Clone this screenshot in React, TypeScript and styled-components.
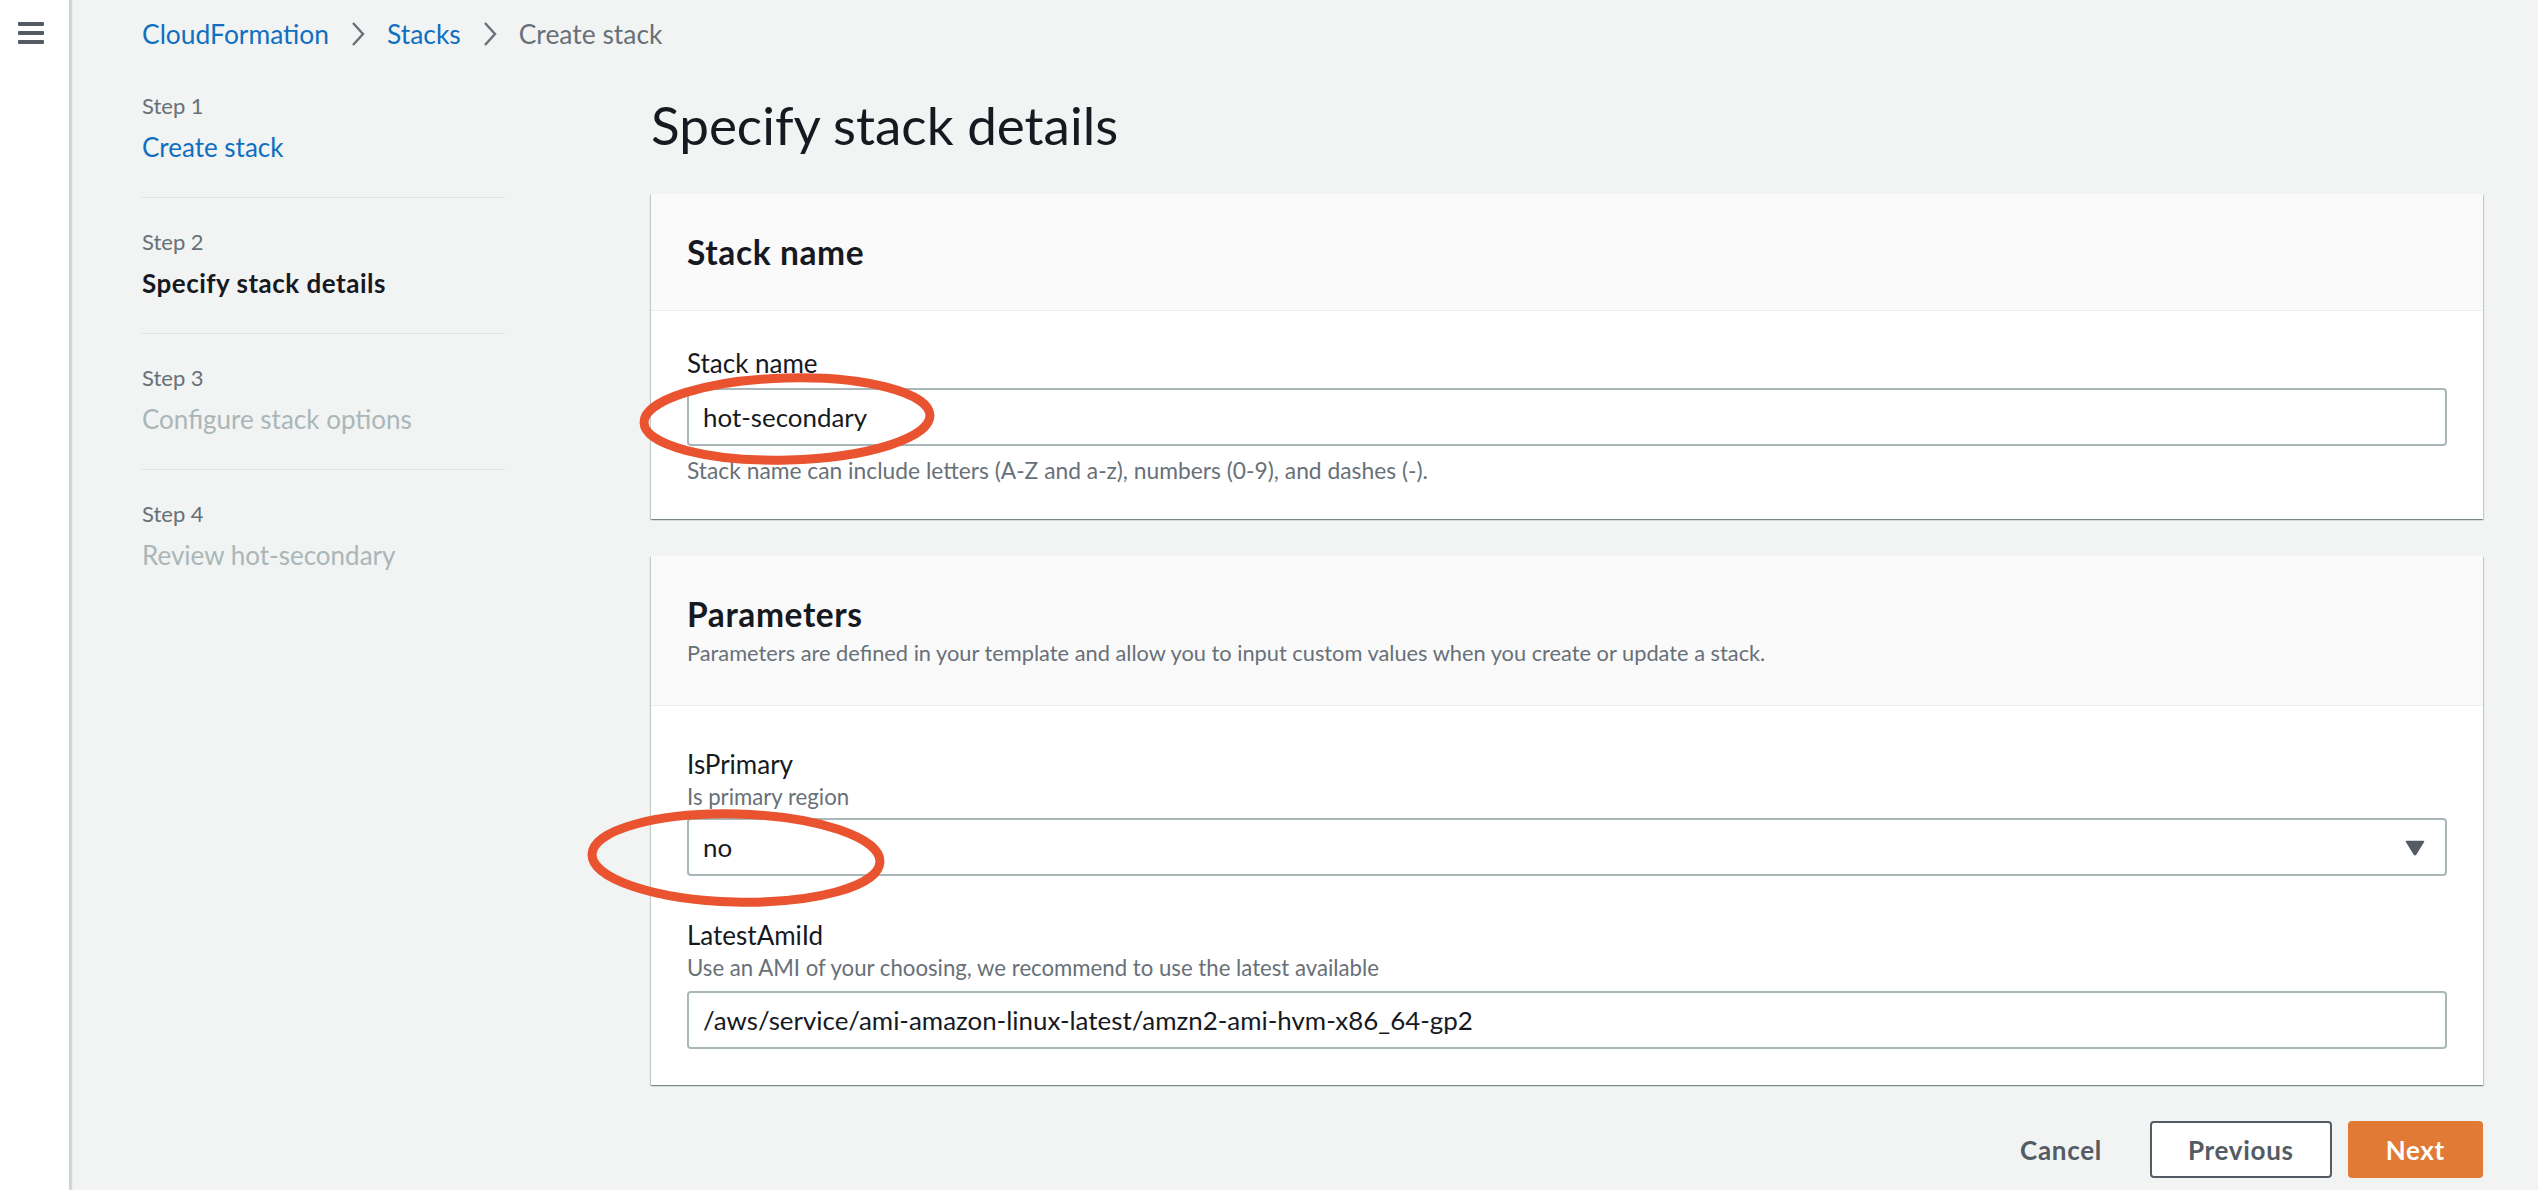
import React from "react";
import styled, { createGlobalStyle } from "styled-components";

// console font stand-in (Amazon Ember is not installed)
const FONT = `"Lato", "Liberation Sans", sans-serif`;

const colors = {
  page: "#f2f3f3",
  text: "#16191f",
  muted: "#687078",
  disabled: "#aab7b8",
  link: "#0f6fc0",
  line: "#dfe3e3",
  control: "#545b64",
  inputBorder: "#aab7b8",
  orange: "#e07a35",
  mark: "#e9532f",
};

const GlobalStyle = createGlobalStyle`
  html, body {
    margin: 0;
    padding: 0;
    background: ${colors.page};
  }
  body {
    font-family: ${FONT};
    color: ${colors.text};
    -webkit-font-smoothing: antialiased;
  }
  * {
    box-sizing: border-box;
  }
`;

const Page = styled.div`
  position: relative;
  display: flex;
  width: 2538px;
  min-height: 1190px;
  background: ${colors.page};
`;

// left rail with the hamburger
const SideRail = styled.nav`
  flex: none;
  width: 71px;
  background: #fff;
  border-right: 2px solid #cfd5d5;
  box-shadow: 1px 0 1px rgba(0, 28, 36, 0.12);
  padding: 22px 0 0 18px;
`;

const MenuButton = styled.button`
  display: flex;
  flex-direction: column;
  gap: 5px;
  width: 26px;
  padding: 0;
  border: 0;
  background: none;
`;

const MenuBar = styled.span`
  display: block;
  height: 4px;
  width: 26px;
  background: ${colors.control};
  border-radius: 1px;
`;

const Content = styled.div`
  flex: 1;
  padding: 14px 55px 0 71px;
`;

const Breadcrumbs = styled.div`
  display: flex;
  align-items: center;
  gap: 21px;
  font-size: 26.4px;
  line-height: 40px;
`;

const Crumb = styled.a`
  color: ${colors.link};
  text-decoration: none;
`;

const CrumbCurrent = styled.span`
  color: ${colors.muted};
`;

const Chevron = () => (
  <svg width="16" height="26" viewBox="0 0 16 26">
    <polyline points="3,2 13,13 3,24" fill="none" stroke="#687078" strokeWidth="2.4" />
  </svg>
);

const Layout = styled.div`
  display: grid;
  grid-template-columns: 363px 1fr;
  column-gap: 146px;
`;

const StepList = styled.ol`
  list-style: none;
  margin: 0;
  padding: 37px 0 0 0;
`;

const StepItem = styled.li`
  padding: 29px 0 30px;
  border-top: 1px solid ${colors.line};

  &:first-child {
    padding-top: 0;
    border-top: 0;
  }
`;

const StepLabel = styled.div`
  font-size: 22px;
  line-height: 29px;
  color: ${colors.muted};
`;

type StepState = "done" | "active" | "todo";

const StepTitle = styled.div<{ $state: StepState }>`
  margin-top: 7px;
  font-size: 26px;
  line-height: 40px;
  color: ${$ => ($.$state === "done" ? colors.link : $.$state === "active" ? colors.text : colors.disabled)};
  font-weight: ${$ => ($.$state === "active" ? 700 : 400)};
  letter-spacing: ${$ => ($.$state === "active" ? "0.5px" : "0")};
`;

const Main = styled.main`
  padding-top: 38px;
`;

const PageTitle = styled.h1`
  margin: 0 0 37px;
  font-size: 53px;
  line-height: 65px;
  font-weight: 400;
  color: ${colors.text};
`;

const Card = styled.section`
  background: #fff;
  box-shadow: 0 1px 1px 0 rgba(0, 28, 36, 0.3), 1px 1px 1px 0 rgba(0, 28, 36, 0.15),
    -1px 1px 1px 0 rgba(0, 28, 36, 0.15);
  margin-bottom: 37px;
`;

const CardHeader = styled.header`
  background: #fafafa;
  border-bottom: 1px solid #eaeded;
  padding: 38px 36px 38px;
`;

const CardTitle = styled.h2`
  margin: 0;
  font-size: 33.5px;
  line-height: 40px;
  font-weight: 700;
  letter-spacing: 0.6px;
`;

const CardDescription = styled.p`
  margin: 4px 0 0;
  font-size: 21.8px;
  line-height: 29px;
  color: ${colors.muted};
`;

const CardBody = styled.div<{ $padTop: number; $padBottom: number }>`
  display: flex;
  flex-direction: column;
  gap: 39px;
  padding: ${$ => $.$padTop}px 36px ${$ => $.$padBottom}px;
`;

const Field = styled.div`
  display: flex;
  flex-direction: column;
`;

const FieldLabel = styled.label`
  font-size: 26px;
  line-height: 40px;
  color: ${colors.text};
`;

const FieldDescription = styled.div`
  margin-top: -2px;
  font-size: 22.2px;
  line-height: 29px;
  color: ${colors.muted};
`;

const FieldHint = styled.div`
  margin-top: 10px;
  font-size: 22.8px;
  line-height: 29px;
  color: ${colors.muted};
`;

const TextInput = styled.div<{ $gap: number }>`
  position: relative;
  display: flex;
  align-items: center;
  height: 58px;
  margin-top: ${$ => $.$gap}px;
  padding: 0 14px;
  border: 2px solid ${colors.inputBorder};
  border-radius: 4px;
  background: #fff;
  font-size: 25.9px;
  color: ${colors.text};
`;

const SelectArrow = styled.span`
  position: absolute;
  right: 20px;
  top: 20px;
  display: flex;
`;

const Actions = styled.div`
  display: flex;
  justify-content: flex-end;
  gap: 16px;
  margin-top: -1px;
`;

const Button = styled.button<{ $variant: "link" | "normal" | "primary" }>`
  height: 57px;
  padding: ${$ => ($.$variant === "link" ? "0 30px 0 36px" : "0 36px")};
  border-radius: 4px;
  font-family: ${FONT};
  font-size: 26px;
  font-weight: 700;
  letter-spacing: 0.7px;
  border: 2px solid
    ${$ => ($.$variant === "normal" ? colors.control : $.$variant === "primary" ? colors.orange : "transparent")};
  background: ${$ => ($.$variant === "primary" ? colors.orange : $.$variant === "normal" ? "#fff" : "transparent")};
  color: ${$ => ($.$variant === "primary" ? "#fff" : colors.control)};
`;

// red hand-drawn rings laid over the screenshot
const Markup = styled.svg`
  position: absolute;
  left: 0;
  top: 0;
  pointer-events: none;
`;

const steps: { label: string; title: string; state: StepState }[] = [
  { label: "Step 1", title: "Create stack", state: "done" },
  { label: "Step 2", title: "Specify stack details", state: "active" },
  { label: "Step 3", title: "Configure stack options", state: "todo" },
  { label: "Step 4", title: "Review hot-secondary", state: "todo" },
];

export default function App() {
  return (
    <Page>
      <GlobalStyle />
      <SideRail>
        <MenuButton aria-label="Open navigation">
          <MenuBar />
          <MenuBar />
          <MenuBar />
        </MenuButton>
      </SideRail>

      <Content>
        <Breadcrumbs>
          <Crumb href="#">CloudFormation</Crumb>
          <Chevron />
          <Crumb href="#">Stacks</Crumb>
          <Chevron />
          <CrumbCurrent>Create stack</CrumbCurrent>
        </Breadcrumbs>

        <Layout>
          <StepList>
            {steps.map(s => (
              <StepItem key={s.label}>
                <StepLabel>{s.label}</StepLabel>
                <StepTitle $state={s.state}>{s.title}</StepTitle>
              </StepItem>
            ))}
          </StepList>

          <Main>
            <PageTitle>Specify stack details</PageTitle>

            <Card>
              <CardHeader>
                <CardTitle>Stack name</CardTitle>
              </CardHeader>
              <CardBody $padTop={32} $padBottom={34}>
                <Field>
                  <FieldLabel>Stack name</FieldLabel>
                  <TextInput $gap={5}>hot-secondary</TextInput>
                  <FieldHint>Stack name can include letters (A-Z and a-z), numbers (0-9), and dashes (-).</FieldHint>
                </Field>
              </CardBody>
            </Card>

            <Card>
              <CardHeader>
                <CardTitle>Parameters</CardTitle>
                <CardDescription>
                  Parameters are defined in your template and allow you to input custom values when you create or
                  update a stack.
                </CardDescription>
              </CardHeader>
              <CardBody $padTop={38} $padBottom={36}>
                <Field>
                  <FieldLabel>IsPrimary</FieldLabel>
                  <FieldDescription>Is primary region</FieldDescription>
                  <TextInput $gap={7}>
                    no
                    <SelectArrow>
                      <svg width="20" height="16" viewBox="0 0 20 16">
                        <path d="M1.5 1.5 H18.5 L10.8 14.2 Q10 15.4 9.2 14.2 Z" fill="#545b64" stroke="#545b64" strokeWidth="1.5" strokeLinejoin="round" />
                      </svg>
                    </SelectArrow>
                  </TextInput>
                </Field>
                <Field>
                  <FieldLabel>LatestAmiId</FieldLabel>
                  <FieldDescription>Use an AMI of your choosing, we recommend to use the latest available</FieldDescription>
                  <TextInput $gap={9}>/aws/service/ami-amazon-linux-latest/amzn2-ami-hvm-x86_64-gp2</TextInput>
                </Field>
              </CardBody>
            </Card>

            <Actions>
              <Button $variant="link">Cancel</Button>
              <Button $variant="normal">Previous</Button>
              <Button $variant="primary">Next</Button>
            </Actions>
          </Main>
        </Layout>
      </Content>

      <Markup width="2538" height="1190" viewBox="0 0 2538 1190">
        <ellipse cx="787" cy="419" rx="143" ry="41" fill="none" stroke={colors.mark} strokeWidth="9" transform="rotate(-1.5 787 419)" />
        <ellipse cx="736" cy="858" rx="144" ry="44" fill="none" stroke={colors.mark} strokeWidth="9" transform="rotate(1.5 736 858)" />
      </Markup>
    </Page>
  );
}
